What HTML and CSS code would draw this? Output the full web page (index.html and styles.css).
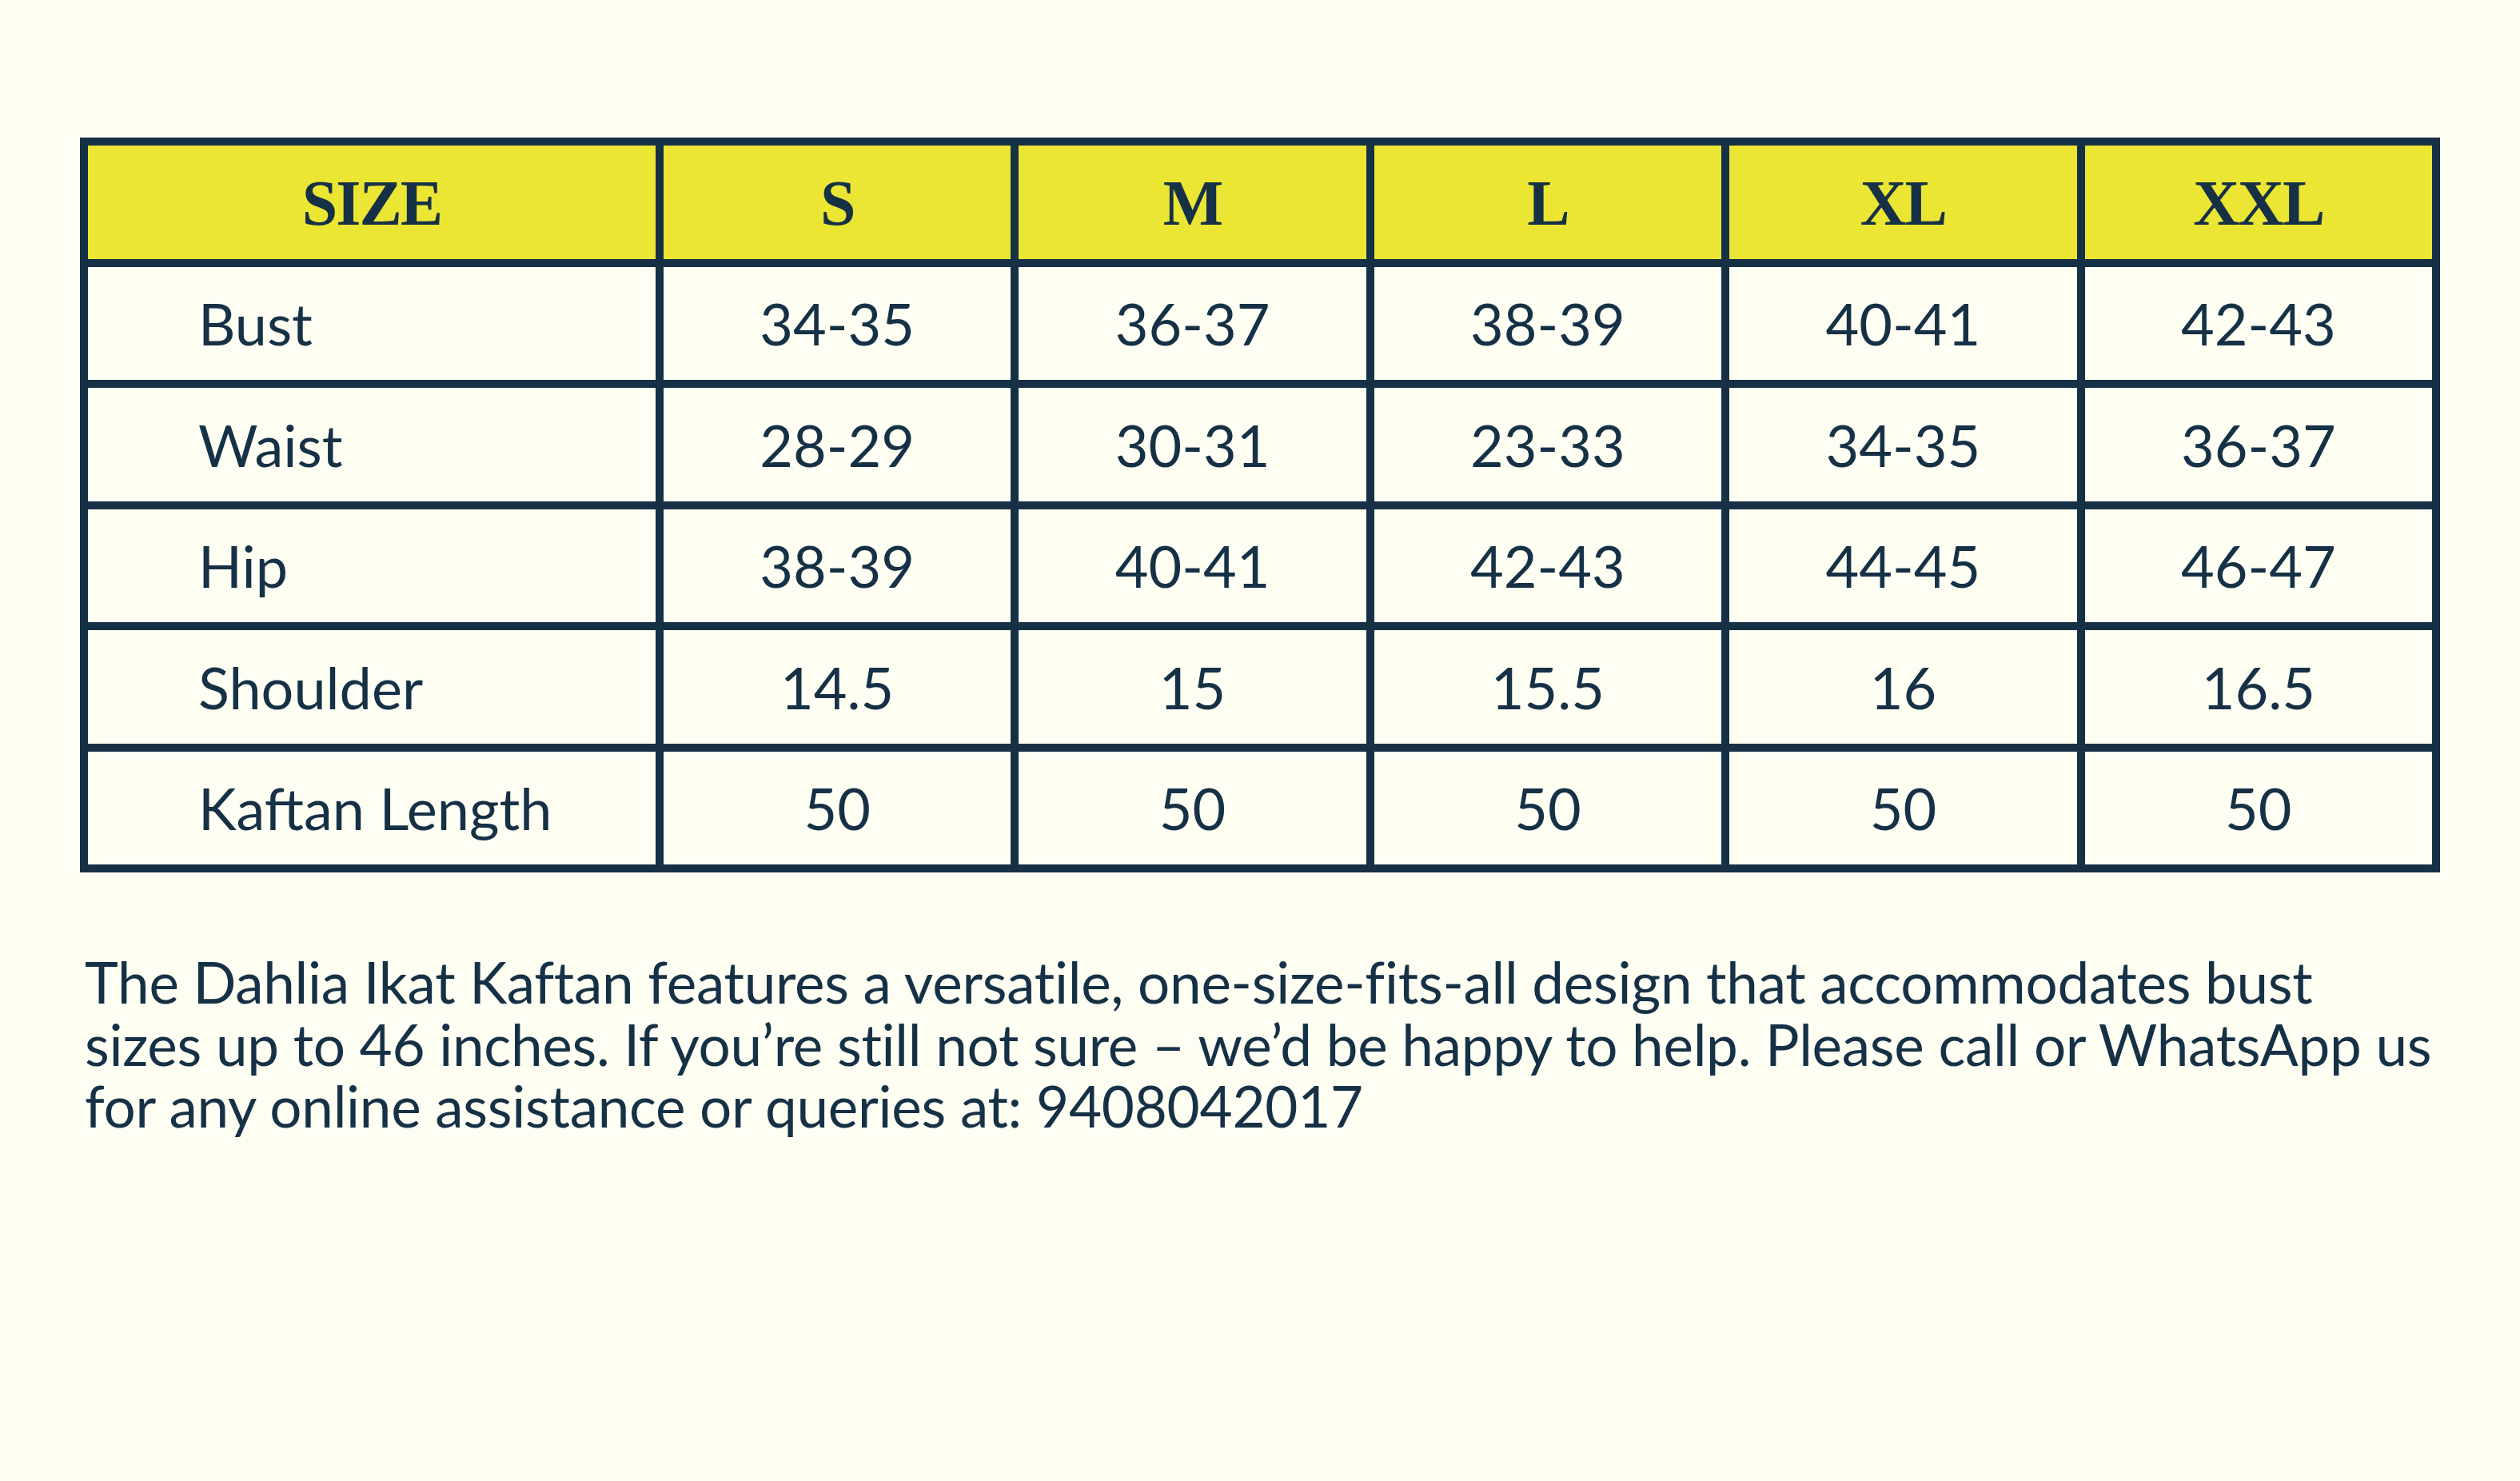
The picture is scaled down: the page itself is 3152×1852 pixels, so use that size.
FILE: index.html
```html
<!DOCTYPE html>
<html lang="en">
<head>
<meta charset="utf-8">
<title>Size Chart</title>
<link rel="stylesheet" href="styles.css">
</head>
<body>
<main class="page">
  <div class="chart">
    <div class="cell head">SIZE</div>
    <div class="cell head">S</div>
    <div class="cell head">M</div>
    <div class="cell head">L</div>
    <div class="cell head">XL</div>
    <div class="cell head">XXL</div>

    <div class="cell label">Bust</div>
    <div class="cell">34-35</div>
    <div class="cell">36-37</div>
    <div class="cell">38-39</div>
    <div class="cell">40-41</div>
    <div class="cell">42-43</div>

    <div class="cell label">Waist</div>
    <div class="cell">28-29</div>
    <div class="cell">30-31</div>
    <div class="cell">23-33</div>
    <div class="cell">34-35</div>
    <div class="cell">36-37</div>

    <div class="cell label">Hip</div>
    <div class="cell">38-39</div>
    <div class="cell">40-41</div>
    <div class="cell">42-43</div>
    <div class="cell">44-45</div>
    <div class="cell">46-47</div>

    <div class="cell label">Shoulder</div>
    <div class="cell">14.5</div>
    <div class="cell">15</div>
    <div class="cell">15.5</div>
    <div class="cell">16</div>
    <div class="cell">16.5</div>

    <div class="cell label">Kaftan Length</div>
    <div class="cell">50</div>
    <div class="cell">50</div>
    <div class="cell">50</div>
    <div class="cell">50</div>
    <div class="cell">50</div>
  </div>
  <p class="note">The Dahlia Ikat Kaftan features a versatile, one-size-fits-all design that accommodates bust<br>sizes up to 46 inches. If you’re still not sure – we’d be happy to help. Please call or WhatsApp us<br>for any online assistance or queries at: 9408042017</p>
</main>
</body>
</html>
```

FILE: styles.css
```css
html, body {
  margin: 0;
  padding: 0;
  background: #fefef3;
}

body {
  width: 3152px;
  height: 1852px;
  overflow: hidden;
  font-family: Lato, "Noto Sans", sans-serif;
  color: #163146;
}

.page {
  padding: 172px 0 0 100px;
}

.chart {
  width: 2952px;
  box-sizing: border-box;
  display: grid;
  grid-template-columns: 710px repeat(5, 1fr);
  grid-auto-rows: 141.5px;
  gap: 10px;
  padding: 10px;
  background: #163146;
}

.cell {
  background: #fefef3;
  display: flex;
  align-items: center;
  justify-content: center;
  font-size: 72px;
  font-weight: 400;
}

.cell.label {
  justify-content: flex-start;
  padding-left: 138px;
}

.cell.head {
  background: #ebe633;
  font-family: "Liberation Serif", "DejaVu Serif", serif;
  font-weight: 700;
  font-size: 80px;
  letter-spacing: -2px;
  padding-top: 4px;
}

.note {
  margin: 98px 0 0 0;
  padding-left: 6px;
  width: 3020px;
  font-size: 71px;
  line-height: 77.5px;
  letter-spacing: -0.28px;
  white-space: nowrap;
}
```
